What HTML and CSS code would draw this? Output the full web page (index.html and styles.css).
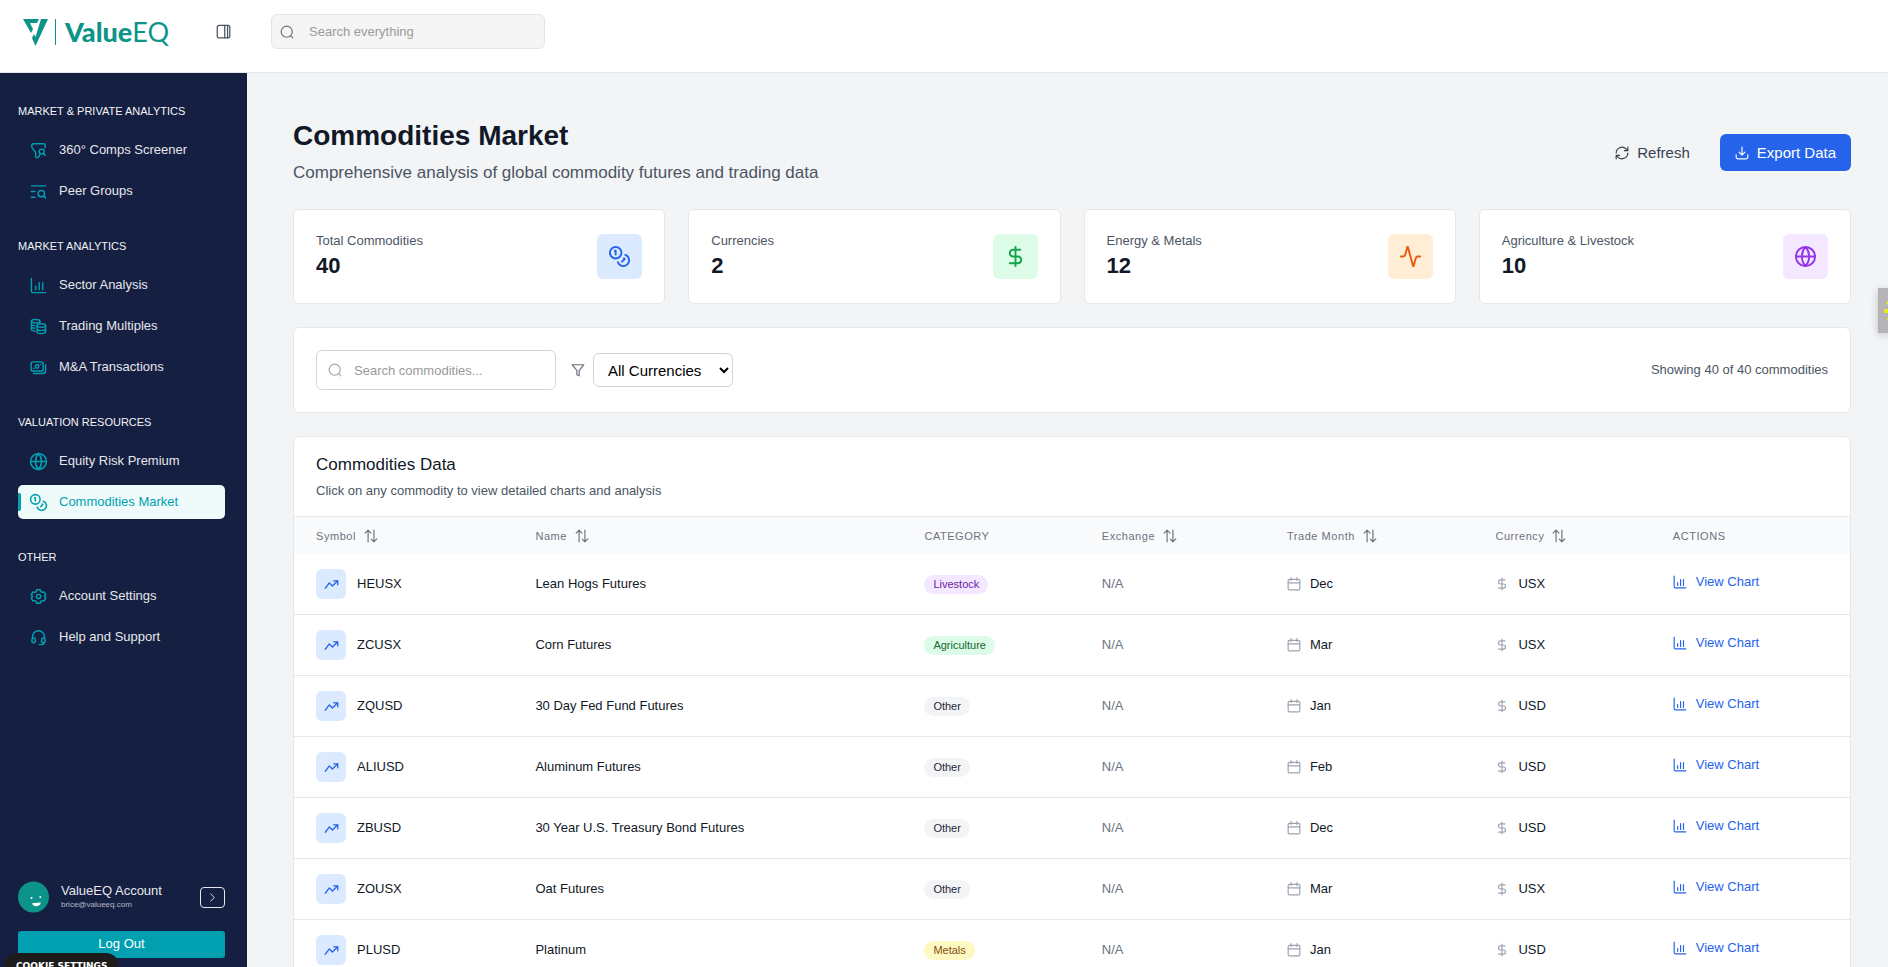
FILE: index.html
```
<!DOCTYPE html>
<html lang="en">

<head>
    <meta charset="UTF-8">
    <meta name="viewport" content="width=device-width, initial-scale=1.0">
    <link rel="stylesheet" href="styles.css">
    <title>Commodities Market</title>
</head>

<body>

    <!-- Shared icons -->
    <svg class="sprite" aria-hidden="true">
        <symbol id="i-search" viewBox="0 0 24 24"><circle cx="11.5" cy="11.5" r="9.5"/><path d="M18.5 18.5 22 22"/></symbol>
        <symbol id="i-panel" viewBox="0 0 24 24"><rect x="2" y="2" width="20" height="20" rx="3"/><path d="M14 2v20M18.500 2v20"/></symbol>
        <symbol id="i-filter-search" viewBox="0 0 24 24"><path d="M21 8c.4-1 .5-1.500.5-2.500 0-2.500-.5-3-2.500-3H5c-2 0-2.500.5-2.500 3 0 2 .5 3 1.500 4l2.500 3.200C7.700 13.900 8 14.500 8 15.500V20c0 2 1 2.500 2.500 1.800l1.500-.8c1.500-.8 1.500-1.500 1.500-3"/><circle cx="16.500" cy="13.500" r="3.500"/><path d="m19.500 16.500 2 2.500"/></symbol>
        <symbol id="i-list-search" viewBox="0 0 24 24"><path d="M2 4h20M2 12h5M2 20h5"/><circle cx="16" cy="15" r="4.500"/><path d="m19.500 18.500 2.500 2.500"/></symbol>
        <symbol id="i-chart" viewBox="0 0 24 24"><path d="M2 2v18a2 2 0 0 0 2 2h18M8 18v-5M13 18V8M18 18V8"/></symbol>
        <symbol id="i-stacks" viewBox="0 0 24 24"><ellipse cx="8" cy="4.500" rx="6" ry="2.500"/><path d="M2 4.500V16c0 1.300 2 2.300 5 2.500M2 8.300c0 1.300 2 2.300 5 2.500M2 12c0 1.300 2 2.300 5 2.500M14 4.500V6"/><ellipse cx="16" cy="10.500" rx="6" ry="2.500"/><path d="M10 10.500v9c0 3.300 12 3.300 12 0v-9M10 15c0 3.300 12 3.300 12 0"/></symbol>
        <symbol id="i-money" viewBox="0 0 24 24"><rect x="1.500" y="4" width="17" height="13" rx="3"/><path d="M5 20.500h13a4 4 0 0 0 4-4V8M5 13.500h.5M14.500 7.500h.5"/><circle cx="10" cy="10.500" r="2.500"/></symbol>
        <symbol id="i-globe" viewBox="0 0 24 24"><circle cx="12" cy="12" r="10"/><path d="M12 2a15 15 0 0 0 0 20 15 15 0 0 0 0-20M2 12h20"/></symbol>
        <symbol id="i-coins" viewBox="0 0 24 24"><circle cx="8" cy="8" r="6"/><path d="M18.090 10.370A6 6 0 1 1 10.340 18M7 6h1v4M16.710 13.880l.7.710-2.820 2.820"/></symbol>
        <symbol id="i-gear" viewBox="0 0 24 24"><circle cx="12" cy="12" r="3"/><path d="M9.500 2.500h5l.8 2.700 1.700 1 2.700-.7 2.500 4.300-1.900 2.200 1.900 2.200-2.500 4.300-2.700-.7-1.700 1-.8 2.700h-5l-.8-2.700-1.700-1-2.700.7-2.500-4.300L3.700 12 1.800 9.800l2.500-4.300 2.700.7 1.700-1z"/></symbol>
        <symbol id="i-headset" viewBox="0 0 24 24"><path d="M3.500 14v-3a8.500 8.500 0 0 1 17 0v3M7 13l-1.500-.5c-1 0-3 1.500-3 3.500s1.500 3.500 3 3.500L8 18zM17 13l1.500-.5c1 0 3 1.500 3 3.500s-1.500 3.500-3 3.500L16 18zM20 19c0 2-1.500 3-4 3h-3"/></symbol>
        <symbol id="i-chevron" viewBox="0 0 24 24"><path d="m8 4 8 8-8 8"/></symbol>
        <symbol id="i-refresh" viewBox="0 0 24 24"><path d="M2 12a10 10 0 0 1 17-7l3 3M22 2v6h-6M22 12a10 10 0 0 1-17 7l-3-3M2 22v-6h6"/></symbol>
        <symbol id="i-download" viewBox="0 0 24 24"><path d="M12 2v13M7 10.500l5 5 5-5M2 15v4a3 3 0 0 0 3 3h14a3 3 0 0 0 3-3v-4"/></symbol>
        <symbol id="i-dollar" viewBox="0 0 24 24"><path d="M12 2v20M17 5H9.500a3.500 3.500 0 0 0 0 7h5a3.500 3.500 0 0 1 0 7H6"/></symbol>
        <symbol id="i-activity" viewBox="0 0 24 24"><path d="M22 12h-2.500a2 2 0 0 0-1.900 1.500l-2.400 8.300a.25.25 0 0 1-.5 0L9.200 2.200a.25.25 0 0 0-.5 0l-2.300 8.300A2 2 0 0 1 4.500 12H2"/></symbol>
        <symbol id="i-filter" viewBox="0 0 24 24"><path d="M2 3h20l-8 9.500V22l-4-2v-7.500z"/></symbol>
        <symbol id="i-sort" viewBox="0 0 24 24"><path d="M7 22V2M2 7l5-5 5 5M17 2v20M12.500 17.500 17 22l5-5"/></symbol>
        <symbol id="i-trend" viewBox="0 0 24 24"><path d="m2 18 6.500-8.500 5 5L22 6M15.500 6H22v6.500"/></symbol>
        <symbol id="i-calendar" viewBox="0 0 24 24"><rect x="2" y="4" width="20" height="18" rx="2"/><path d="M7 1v5M17 1v5M2 10h20"/></symbol>
    </svg>

    <header class="topbar">
        <a class="logo" href="#">
            <svg class="logo-mark" viewBox="0 0 26 28" aria-hidden="true">
                <path d="M0 1h16l-2 4H7l3 6-2 4z"/>
                <path d="M18 1h7L12.500 28 9 20l2-4 1.500 3z"/>
            </svg>
            <span class="logo-line"></span>
            <span class="logo-text">Value<span>EQ</span></span>
        </a>
        <button class="panel-toggle" type="button" aria-label="Toggle sidebar"><svg class="icon"><use href="#i-panel"/></svg></button>
        <label class="search top-search">
            <svg class="icon"><use href="#i-search"/></svg>
            <input type="text" placeholder="Search everything" aria-label="Search everything">
        </label>
    </header>

    <div class="layout">
        <aside class="sidebar">
            <nav class="menu">
                <section>
                    <h2>MARKET &amp; PRIVATE ANALYTICS</h2>
                    <a href="#"><svg class="icon"><use href="#i-filter-search"/></svg>360° Comps Screener</a>
                    <a href="#"><svg class="icon"><use href="#i-list-search"/></svg>Peer Groups</a>
                </section>
                <section>
                    <h2>MARKET ANALYTICS</h2>
                    <a href="#"><svg class="icon"><use href="#i-chart"/></svg>Sector Analysis</a>
                    <a href="#"><svg class="icon"><use href="#i-stacks"/></svg>Trading Multiples</a>
                    <a href="#"><svg class="icon"><use href="#i-money"/></svg>M&amp;A Transactions</a>
                </section>
                <section>
                    <h2>VALUATION RESOURCES</h2>
                    <a href="#"><svg class="icon large"><use href="#i-globe"/></svg>Equity Risk Premium</a>
                    <a href="#" class="active"><svg class="icon large"><use href="#i-coins"/></svg>Commodities Market</a>
                </section>
                <section>
                    <h2>OTHER</h2>
                    <a href="#"><svg class="icon"><use href="#i-gear"/></svg>Account Settings</a>
                    <a href="#"><svg class="icon"><use href="#i-headset"/></svg>Help and Support</a>
                </section>
            </nav>

            <div class="account">
                <div class="profile">
                    <svg class="avatar" viewBox="0 0 32 32" aria-hidden="true">
                        <circle class="face" cx="16" cy="16" r="16"/>
                        <circle cx="14" cy="17" r="1"/><circle cx="23" cy="16" r="1"/>
                        <path d="M14.500 22.500l9-.7c0 4.500-8 5-9 .7z"/>
                    </svg>
                    <div class="who">
                        <p class="name">ValueEQ Account</p>
                        <p class="email">brice@valueeq.com</p>
                    </div>
                    <button class="more" type="button" aria-label="Open account"><svg class="icon"><use href="#i-chevron"/></svg></button>
                </div>
                <button class="logout" type="button">Log Out</button>
            </div>
        </aside>

        <main class="content">
            <div class="page-head">
                <div>
                    <h1>Commodities Market</h1>
                    <p>Comprehensive analysis of global commodity futures and trading data</p>
                </div>
                <div class="actions">
                    <button class="btn" type="button"><svg class="icon"><use href="#i-refresh"/></svg>Refresh</button>
                    <button class="btn primary" type="button"><svg class="icon"><use href="#i-download"/></svg>Export Data</button>
                </div>
            </div>

            <div class="stats">
                <div class="card stat">
                    <div><p class="label">Total Commodities</p><p class="value">40</p></div>
                    <span class="tile blue"><svg class="icon"><use href="#i-coins"/></svg></span>
                </div>
                <div class="card stat">
                    <div><p class="label">Currencies</p><p class="value">2</p></div>
                    <span class="tile green"><svg class="icon"><use href="#i-dollar"/></svg></span>
                </div>
                <div class="card stat">
                    <div><p class="label">Energy &amp; Metals</p><p class="value">12</p></div>
                    <span class="tile orange"><svg class="icon"><use href="#i-activity"/></svg></span>
                </div>
                <div class="card stat">
                    <div><p class="label">Agriculture &amp; Livestock</p><p class="value">10</p></div>
                    <span class="tile purple"><svg class="icon"><use href="#i-globe"/></svg></span>
                </div>
            </div>

            <div class="card filters">
                <label class="search">
                    <svg class="icon"><use href="#i-search"/></svg>
                    <input type="text" placeholder="Search commodities..." aria-label="Search commodities">
                </label>
                <label class="currency">
                    <svg class="icon"><use href="#i-filter"/></svg>
                    <select aria-label="Currency">
                        <option>All Currencies</option>
                        <option>USD</option>
                        <option>USX</option>
                    </select>
                </label>
                <p class="count">Showing 40 of 40 commodities</p>
            </div>

            <div class="card data">
                <div class="data-head">
                    <h3>Commodities Data</h3>
                    <p>Click on any commodity to view detailed charts and analysis</p>
                </div>
                <table>
                    <colgroup>
                        <col class="c-symbol"><col class="c-name"><col class="c-category"><col class="c-exchange"><col class="c-month"><col class="c-currency"><col>
                    </colgroup>
                    <thead>
                        <tr>
                            <th><button type="button">Symbol<svg class="icon"><use href="#i-sort"/></svg></button></th>
                            <th><button type="button">Name<svg class="icon"><use href="#i-sort"/></svg></button></th>
                            <th>CATEGORY</th>
                            <th><button type="button">Exchange<svg class="icon"><use href="#i-sort"/></svg></button></th>
                            <th><button type="button">Trade Month<svg class="icon"><use href="#i-sort"/></svg></button></th>
                            <th><button type="button">Currency<svg class="icon"><use href="#i-sort"/></svg></button></th>
                            <th>ACTIONS</th>
                        </tr>
                    </thead>
                    <tbody id="rows"></tbody>
                </table>
            </div>
        </main>
    </div>

    <button class="cookie" type="button">COOKIE SETTINGS</button>
    <button class="side-widget" type="button" aria-label="Open widget">
        <svg viewBox="0 0 10 45" aria-hidden="true"><path d="M6 21h4v4H6zM8 15l2-2v4zM9 30h1v2H9z"/></svg>
    </button>

    <script src="script.js"></script>
</body>

</html>
```
FILE: styles.css
```
* {
    box-sizing: border-box;
}

body {
    margin: 0;
    height: 100vh;
    overflow: hidden;
    display: flex;
    flex-direction: column;
    background-color: #f3f4f6;
    color: #111827;
    font-family: "Liberation Sans", Arial, sans-serif;
    font-size: 13px;
    line-height: 20px;
}

h1, h2, h3, p {
    margin: 0;
}

button, input, select {
    font-family: inherit;
    font-size: inherit;
    color: inherit;
}

button {
    border: none;
    background: none;
    padding: 0;
    cursor: pointer;
}

a {
    text-decoration: none;
}

.sprite {
    position: absolute;
    width: 0;
    height: 0;
}

.icon {
    width: 14px;
    height: 14px;
    flex: none;
    fill: none;
    stroke: currentColor;
    stroke-width: 2;
    stroke-linecap: round;
    stroke-linejoin: round;
}

/* Top bar */
.topbar {
    display: flex;
    align-items: flex-start;
    flex: none;
    height: 73px;
    padding: 14px 23px;
    background-color: white;
    border-bottom: 1px solid #e5e7eb;
}

.logo {
    display: flex;
    align-items: center;
    width: 193px;
    height: 35px;
    color: #0d9488;
}

.logo-mark {
    width: 26px;
    height: 28px;
    fill: currentColor;
}

.logo-line {
    width: 1px;
    height: 26px;
    margin: 0 9px 0 6px;
    background-color: currentColor;
}

.logo-text {
    font-family: Lato, sans-serif;
    font-size: 27px;
    font-weight: 900;
    line-height: 32px;
}

.logo-text span {
    font-weight: 400;
}

.panel-toggle {
    display: flex;
    align-items: center;
    height: 35px;
    margin-right: 40px;
    color: #4b5563;
}

.panel-toggle .icon {
    width: 15px;
    height: 15px;
}

.search {
    display: flex;
    align-items: center;
    gap: 12px;
    width: 240px;
    height: 40px;
    padding: 0 11px;
    border: 1px solid #d1d5db;
    border-radius: 6px;
    color: #9ca3af;
}

.search input {
    flex: 1;
    min-width: 0;
    padding: 0;
    border: none;
    outline: none;
    background: none;
    color: #111827;
}

.search input::placeholder {
    color: #9a9a9a;
}

.top-search {
    gap: 15px;
    width: 274px;
    height: 35px;
    padding: 0 8px;
    background-color: #f5f5f5;
    border-color: #e5e5e5;
    color: #6b7280;
}

/* Sidebar */
.layout {
    display: flex;
    flex: 1;
    min-height: 0;
}

.sidebar {
    display: flex;
    flex-direction: column;
    justify-content: space-between;
    flex: none;
    width: 247px;
    padding: 30px 22px 9px 18px;
    background-color: #151f42;
    color: #e5e7eb;
}

.menu {
    display: flex;
    flex-direction: column;
    gap: 30px;
}

.menu section {
    display: flex;
    flex-direction: column;
    gap: 7px;
}

.menu h2 {
    margin-bottom: 7px;
    font-size: 11px;
    font-weight: 400;
    line-height: 16px;
    color: #f3f4f6;
}

.menu a {
    display: flex;
    align-items: center;
    gap: 12px;
    height: 34px;
    padding: 0 12px;
    border-radius: 5px;
    color: #e5e7eb;
}

.menu .icon {
    width: 17px;
    height: 17px;
    color: #00a0b0;
}

.menu .icon.large {
    width: 19px;
    height: 19px;
    margin: 0 -1px;
}

.menu .active {
    position: relative;
    background-color: #effbfb;
    color: #00a0b0;
}

.menu .active::before {
    content: "";
    position: absolute;
    left: 0;
    top: 8px;
    width: 3px;
    height: 18px;
    border-radius: 0 2px 2px 0;
    background-color: #00a0b0;
}

.account {
    display: flex;
    flex-direction: column;
    gap: 18px;
}

.profile {
    display: flex;
    align-items: center;
    gap: 12px;
}

.avatar {
    width: 31px;
    height: 32px;
    fill: white;
}

.avatar .face {
    fill: #0d9488;
}

.who {
    flex: 1;
}

.name {
    line-height: 16px;
}

.email {
    font-size: 8px;
    line-height: 12px;
    color: #b6bac6;
}

.more {
    display: flex;
    align-items: center;
    justify-content: center;
    width: 25px;
    height: 21px;
    border: 1px solid #e5e7eb;
    border-radius: 4px;
}

.more .icon {
    width: 11px;
    height: 11px;
}

.logout {
    height: 27px;
    padding-bottom: 2px;
    border-radius: 3px;
    background-color: #00a0b0;
    color: white;
}

/* Content */
.content {
    flex: 1;
    min-width: 0;
    display: flex;
    flex-direction: column;
    gap: 23px;
    padding: 46px 37px 0 46px;
    overflow: hidden;
}

.card {
    flex: none;
    background-color: white;
    border: 1px solid #e5e7eb;
    border-radius: 6px;
}

.page-head {
    display: flex;
    align-items: center;
    justify-content: space-between;
}

.page-head h1 {
    margin-bottom: 6px;
    font-size: 28px;
    line-height: 34px;
}

.page-head p {
    font-size: 17px;
    line-height: 27px;
    color: #4b5563;
}

.actions {
    display: flex;
    gap: 15px;
}

.btn {
    display: flex;
    align-items: center;
    gap: 8px;
    height: 37px;
    padding: 0 15px;
    border-radius: 6px;
    font-size: 15px;
    color: #374151;
}

.btn.primary {
    background-color: #2563eb;
    color: white;
}

.stats {
    display: grid;
    grid-template-columns: repeat(4, 1fr);
    gap: 23px;
}

.stat {
    display: flex;
    align-items: center;
    justify-content: space-between;
    padding: 22px;
}

.stat .label {
    line-height: 18px;
    color: #4b5563;
}

.stat .value {
    font-size: 22px;
    font-weight: 700;
    line-height: 31px;
}

.tile {
    display: flex;
    align-items: center;
    justify-content: center;
    flex: none;
    width: 45px;
    height: 45px;
    border-radius: 6px;
}

.tile .icon {
    width: 23px;
    height: 23px;
}

.tile.small {
    width: 30px;
    height: 30px;
}

.tile.small .icon {
    width: 15px;
    height: 15px;
}

.blue {
    background-color: #dbeafe;
    color: #2563eb;
}

.green {
    background-color: #dcfce7;
    color: #16a34a;
}

.orange {
    background-color: #ffedd5;
    color: #ea580c;
}

.purple {
    background-color: #f3e8ff;
    color: #9333ea;
}

.filters {
    display: flex;
    align-items: center;
    gap: 15px;
    padding: 22px;
}

.currency {
    display: flex;
    align-items: center;
    gap: 8px;
    color: #6b7280;
}

.currency select {
    width: 140px;
    height: 34px;
    padding: 0 0 0 10px;
    border: 1px solid #d1d5db;
    border-radius: 6px;
    background-color: white;
    font-size: 15px;
    color: black;
}

.count {
    margin-left: auto;
    color: #4b5563;
}

/* Table */
.data {
    overflow: hidden;
}

.data-head {
    padding: 15px 22px;
    border-bottom: 1px solid #e5e7eb;
}

.data-head h3 {
    font-size: 17px;
    font-weight: 400;
    line-height: 25px;
}

.data-head p {
    margin-top: 4px;
    color: #4b5563;
}

table {
    width: 100%;
    table-layout: fixed;
    border-collapse: separate;
    border-spacing: 0;
}

.c-symbol {
    width: 14.1%;
}

.c-name {
    width: 25%;
}

.c-category,
.c-currency {
    width: 11.4%;
}

.c-exchange {
    width: 11.9%;
}

.c-month {
    width: 13.4%;
}

th {
    height: 37px;
    padding: 0 22px;
    background-color: #f9fafb;
    font-size: 11px;
    font-weight: 400;
    letter-spacing: 0.05em;
    text-align: left;
    color: #6b7280;
}

th button {
    display: flex;
    align-items: center;
    gap: 8px;
    letter-spacing: inherit;
}

td {
    height: 61px;
    padding: 0 22px;
    border-bottom: 1px solid #e5e7eb;
}

.cell {
    display: flex;
    align-items: center;
    gap: 9px;
}

.cell .tile {
    margin-right: 2px;
}

.cell > .icon {
    color: #9ca3af;
}

.muted {
    color: #6b7280;
}

.badge {
    display: inline-block;
    padding: 0 9px;
    border-radius: 10px;
    font-size: 11px;
    line-height: 19px;
    vertical-align: middle;
}

.livestock {
    background-color: #f3e8ff;
    color: #6b21a8;
}

.agriculture {
    background-color: #dcfce7;
    color: #166534;
}

.other {
    background-color: #f3f4f6;
    color: #1f2937;
}

.metals {
    background-color: #fef9c3;
    color: #854d0e;
}

td a {
    display: flex;
    align-items: center;
    gap: 9px;
    padding-bottom: 4px;
    color: #2563eb;
}

/* Floating items */
.cookie {
    position: fixed;
    left: 4px;
    bottom: -12px;
    height: 26px;
    padding: 0 12px;
    border-radius: 13px;
    background-color: #1c1c1c;
    color: white;
    font-family: "DejaVu Sans", Verdana, sans-serif;
    font-size: 9px;
    font-weight: 700;
}

.side-widget {
    position: fixed;
    right: 0;
    top: 288px;
    width: 10px;
    height: 45px;
    background-color: #b5b3b6;
    box-shadow: 0 2px 8px rgba(0, 0, 0, 0.2);
}

.side-widget svg {
    display: block;
    width: 10px;
    height: 45px;
    fill: #e8ea1c;
}
```
FILE: script.js
```
const commodities = [
    { symbol: "HEUSX", name: "Lean Hogs Futures", category: "Livestock", month: "Dec", currency: "USX" },
    { symbol: "ZCUSX", name: "Corn Futures", category: "Agriculture", month: "Mar", currency: "USX" },
    { symbol: "ZQUSD", name: "30 Day Fed Fund Futures", category: "Other", month: "Jan", currency: "USD" },
    { symbol: "ALIUSD", name: "Aluminum Futures", category: "Other", month: "Feb", currency: "USD" },
    { symbol: "ZBUSD", name: "30 Year U.S. Treasury Bond Futures", category: "Other", month: "Dec", currency: "USD" },
    { symbol: "ZOUSX", name: "Oat Futures", category: "Other", month: "Mar", currency: "USX" },
    { symbol: "PLUSD", name: "Platinum", category: "Metals", month: "Jan", currency: "USD" }
];

function icon(name) {
    return `<svg class="icon"><use href="#i-${name}"/></svg>`;
}

// Build one table row per commodity
document.getElementById("rows").innerHTML = commodities.map(function (item) {
    return `
        <tr>
            <td><div class="cell"><span class="tile small blue">${icon("trend")}</span>${item.symbol}</div></td>
            <td>${item.name}</td>
            <td><span class="badge ${item.category.toLowerCase()}">${item.category}</span></td>
            <td class="muted">N/A</td>
            <td><div class="cell">${icon("calendar")}${item.month}</div></td>
            <td><div class="cell">${icon("dollar")}${item.currency}</div></td>
            <td><a href="#">${icon("chart")}View Chart</a></td>
        </tr>`;
}).join("");
```
